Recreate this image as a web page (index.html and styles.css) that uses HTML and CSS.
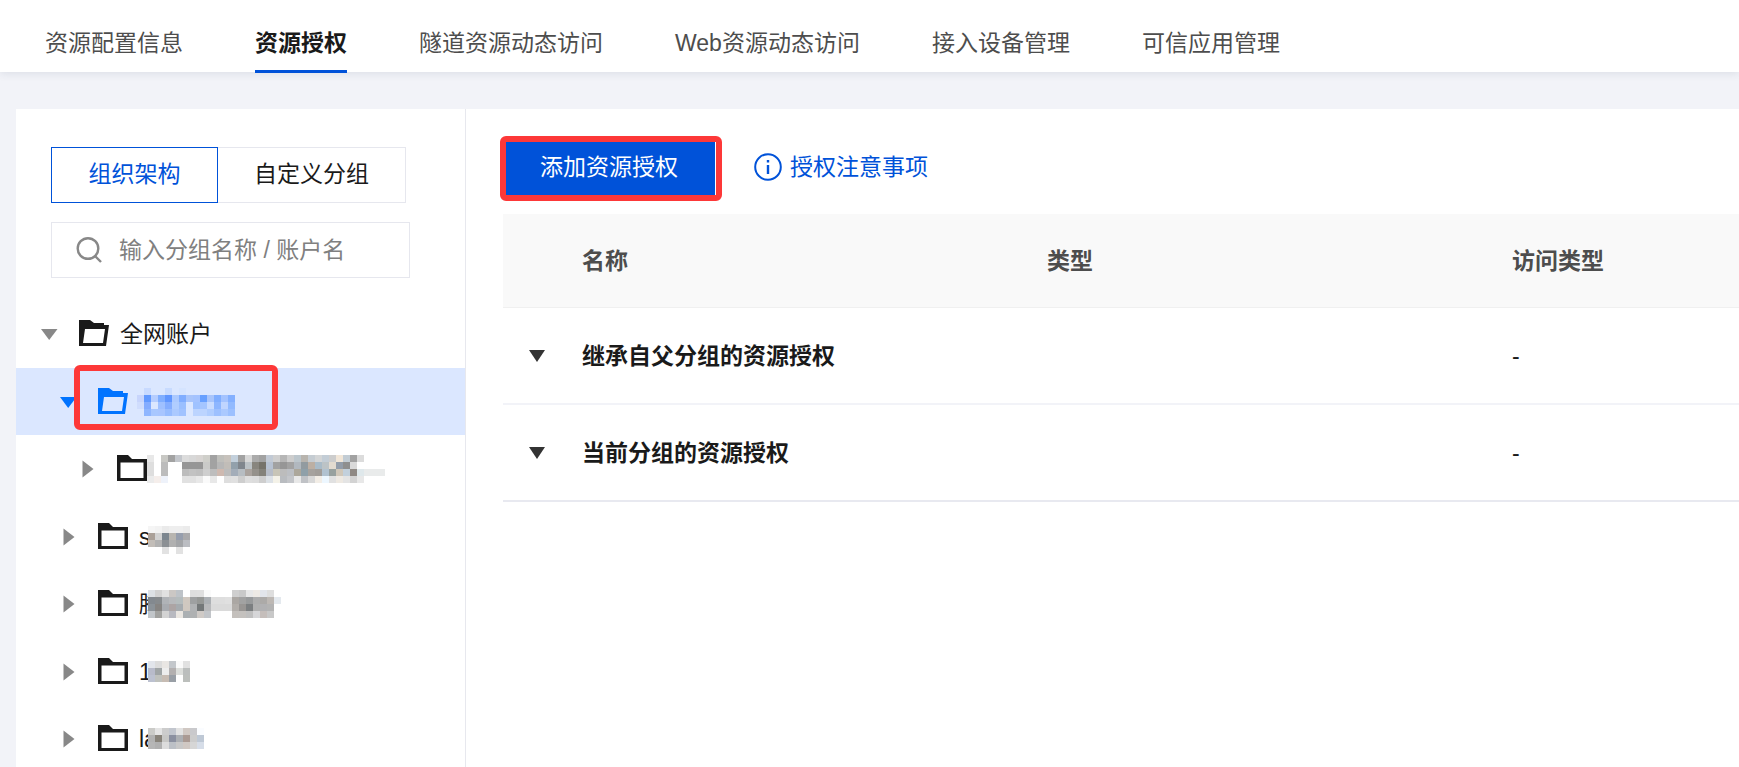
FILE: index.html
```html
<!DOCTYPE html>
<html lang="zh-CN">
<head>
<meta charset="utf-8">
<title>资源授权</title>
<link rel="stylesheet" href="styles.css">
</head>
<body>
<svg class="sprite" aria-hidden="true">
  <symbol id="folder" viewBox="0 0 30 26"><path fill="currentColor" fill-rule="evenodd" d="M0 0H11L15 4H30V26H0ZM3.500 7.500V23H26.500V7.500Z"/></symbol>
  <symbol id="folder-open" viewBox="0 0 30 26"><path fill="currentColor" fill-rule="evenodd" d="M0 0H11L15 3H25V5H30L27 26H0ZM6 9L4 23H24L26 9Z"/></symbol>
  <symbol id="down" viewBox="0 0 18 18"><path fill="currentColor" d="M1 4H17.500L9.200 15Z"/></symbol>
  <symbol id="right" viewBox="0 0 18 18"><path fill="currentColor" d="M4.500 0.500L15.500 9L4.500 17.500Z"/></symbol>
</svg>
<div class="page">
  <nav class="tabs">
    <a class="tab" href="#config">资源配置信息</a>
    <a class="tab active" href="#auth" aria-current="page">资源授权</a>
    <a class="tab" href="#tunnel">隧道资源动态访问</a>
    <a class="tab" href="#web">Web资源动态访问</a>
    <a class="tab" href="#device">接入设备管理</a>
    <a class="tab" href="#app">可信应用管理</a>
  </nav>
  <div class="body">
    <aside class="sidebar">
      <div class="switch">
        <button class="switch-item on" type="button">组织架构</button>
        <button class="switch-item" type="button">自定义分组</button>
      </div>
      <label class="search">
        <svg class="search-icon" viewBox="0 0 26 26" aria-hidden="true"><g fill="none" stroke="#888" stroke-width="2.400"><circle cx="12" cy="11.500" r="10.300"/><path d="M18.500 18.500L25 25"/></g></svg>
        <input class="search-input" type="text" placeholder="输入分组名称 / 账户名" aria-label="输入分组名称 / 账户名">
      </label>
      <ul class="tree">
        <li class="node">
          <svg class="arrow"><use href="#down"/></svg>
          <svg class="folder"><use href="#folder-open"/></svg>
          <span class="name">全网账户</span>
        </li>
        <li class="node level1 selected">
          <svg class="arrow"><use href="#down"/></svg>
          <svg class="folder"><use href="#folder-open"/></svg>
          <span class="mask lead" data-cells="
            dbe7ff c8daff dbe7ff dbe7ff c8dbff dbe7ff d5e4ff dbe7ff dbe7ff dbe7ff dbe7ff dbe7ff dbe7ff dbe7ff
            c8d5fc 6299ff b5cdff 80aeff 6096ff abc9ff 80adff a9c5fb a4c3ff 68a0ff a9c5fb 80aeff a4c3ff 84b0ff
            d0ddfd 84acff dbe7ff 9fc0ff 84adff b0cdff 9abfff dbe7ff 9fc2ff a4c5ff c9dcff 8db6ff c0d5ff 92baff
            dbe7ff 8fb6ff a8c7ff a8c5ff 97bcff abc9ff a0c2ff dbe7ff bcd4ff bcd4ff b0cdff 9dc0ff abc9ff 9cc0ff"></span>
          <span class="highlight"></span>
        </li>
        <li class="node level2">
          <svg class="arrow"><use href="#right"/></svg>
          <svg class="folder"><use href="#folder"/></svg>
          <span class="mask" data-cells="
            e8e8e8 fff c8c8c4 a2a2a2 c3c6cb dcdcdc d8d8d8 d8d5d3 cfcfca a2a2a2 bfbfbb c7c2bc c3d0dc a2a2a2 d8d8d8 ababab a2a2a2 c2cad5 cfcfcf b6b6b6 cdcdcd bcc6cc b8b4ae c5ccd2 d3d5d6 c3cdd6 cdcdcd f1e6d8 c2ccd4 a2a2a2 dcdcdc fff fff fff
            dedede fff bcbcbc fff fff 969696 969696 969696 cacac8 a2a2a2 b7b7b7 c1bdb8 92a0ab 80868d bcc2c6 88857e 76736a b7c2d2 a2a2a2 969696 a2a2a2 b1b8bf 929ba0 bcafa3 a9bbc8 bcc3c6 e3dbd0 939daa 8f8f8f dadada fff fff fff fff
            dedede fff bcbcbc fff fff bcbcbc c2c2c2 bfbfbf cecece bdbdbd ceb9b0 bcbcbc a3adb9 b7bdc2 aaa39e 95918b 84827a b7bdc8 c8c5b7 bcbcbc bcbfc4 aca79b 8fa0a9 a6a29e a29e9a b1c2d0 98a19f d0c7b9 c2d0dc 8f8984 dfe8eb e9ebeb e9ebeb e9ebeb
            ebebeb f5eeeb eef2fa fff fff e1e1e1 e1e1e1 e8e8e8 fafafa e8e8e8 fff dedede e0e0e0 cecece dedede dcdcdc cecece dce1e6 f4f2e8 b9bcc0 c3c5c9 e8e8e8 c0c2c6 d8d8d8 f2ede6 edf7ff e1e1e1 eee9e2 e4e4e4 d3d3d3 e8e8e8 fff fff fff"></span>
        </li>
        <li class="node level1">
          <svg class="arrow"><use href="#right"/></svg>
          <svg class="folder"><use href="#folder"/></svg>
          <span class="name covered">s</span>
          <span class="mask descender" data-cells="
            f5f5f5 f2f2f2 eaeaea eeeeee eeeeee ebebeb
            aaa098 d2d2d2 7c868f b8b5b0 969ead aaaaac
            c2bdb8 b2b2b2 8c9094 b0b0b0 a3a5a8 bbbdc2
            fff fff e2e2e2 fff e2e2e2 fff"></span>
        </li>
        <li class="node level1">
          <svg class="arrow"><use href="#right"/></svg>
          <svg class="folder"><use href="#folder"/></svg>
          <span class="name covered">腾</span>
          <span class="mask" data-cells="
            dde1e5 d2d2d2 e1e1e1 cbc7c4 bec3c8 fff dedede dfdfdf fafafa fff fff fff cfcfcf c9c9c9 e8e8e8 eeeae5 e2e5eb dedede fff
            83898f 868a8d b0b3b7 b7b9bc b5bcbd d0c8c0 9ea0a1 969896 acb0b4 dedede dedede e0e0e0 aba7a3 a2a2a2 989a9b adadad acaaa8 bdb8b4 e4e9ee
            8b9298 868482 a8abb0 aca4a4 a6abaf d0c8c0 b0b2b4 747879 b8b9bb dadada dadada dadada b2aeaa 989593 7b7e80 b0b0b0 b1b1b3 b3b3b3 fff
            c1c5c9 a2a2a0 d3d3d3 b8b9c0 eae6e1 abb0b3 afb1b2 cfcac6 c2c5c9 fff fff fff c4c0bc c4c1be bfbfbf d6d6d8 c5bebb c8c8c8 fff"></span>
        </li>
        <li class="node level1">
          <svg class="arrow"><use href="#right"/></svg>
          <svg class="folder"><use href="#folder"/></svg>
          <span class="name covered">1</span>
          <span class="mask" data-cells="
            e2e5eb dcdcdc e9e6e3 c3c7cb fafafa e1e1e1
            b8bbca a0a5a6 ededed b3b0b0 dcdedb bbbebd
            bcc1d0 bfc1bd c7bcb3 999fa6 fff bcbfbc"></span>
        </li>
        <li class="node level1">
          <svg class="arrow"><use href="#right"/></svg>
          <svg class="folder"><use href="#folder"/></svg>
          <span class="name covered">la</span>
          <span class="mask" data-cells="
            cbcbc8 e4e4e4 cccccc c2c6ce e2e2e2 d0c8c3 c9c9cc fafcff
            b2b2b2 88837a c7c7c5 8b90a0 acafb3 aa9a93 cccccc bec8d5
            b6b6b6 b0b0b0 dcdcdc bcc0c6 c8c8c8 d0c8c3 d6d6d6 d6dde8"></span>
        </li>
      </ul>
    </aside>
    <main class="main">
      <div class="toolbar">
        <div class="add-wrap">
          <button class="add" type="button">添加资源授权</button>
          <span class="highlight"></span>
        </div>
        <a class="notice" href="#notice">
          <svg class="notice-icon" viewBox="0 0 28 28" aria-hidden="true"><circle cx="14" cy="14" r="12.800" fill="none" stroke="#0052d9" stroke-width="2"/><path fill="#0052d9" d="M12.800 7H15.200V9.500H12.800ZM12.800 12H15.200V21H12.800Z"/></svg>
          授权注意事项
        </a>
      </div>
      <table class="grid">
        <colgroup><col class="col-toggle"><col class="col-name"><col class="col-type"><col></colgroup>
        <thead>
          <tr><th></th><th>名称</th><th>类型</th><th>访问类型</th></tr>
        </thead>
        <tbody>
          <tr><td><svg class="toggle" viewBox="0 0 16 12"><path d="M0 0H16L8 12Z"/></svg></td><td class="strong">继承自父分组的资源授权</td><td></td><td>-</td></tr>
          <tr><td><svg class="toggle" viewBox="0 0 16 12"><path d="M0 0H16L8 12Z"/></svg></td><td class="strong">当前分组的资源授权</td><td></td><td>-</td></tr>
        </tbody>
      </table>
    </main>
  </div>
</div>
<script src="mask.js"></script>
</body>
</html>
```
FILE: styles.css
```css
* { box-sizing: border-box; }
body {
  margin: 0;
  font: 23px/32px "Liberation Sans", "Noto Sans CJK SC", sans-serif;
  color: #1a1a1a;
}
button, input { font: inherit; color: inherit; }
a { text-decoration: none; }
.sprite { display: none; }

.page {
  display: flex;
  flex-direction: column;
  height: 100vh;
  overflow: hidden;
  background: #f2f3f8;
}

.tabs {
  display: flex;
  gap: 72px;
  height: 72px;
  flex: none;
  padding-left: 45px;
  background: #fff;
  box-shadow: 0 2px 8px rgba(40, 60, 90, 0.1);
}
.tab {
  height: 73px;
  padding-top: 27px;
  color: #4d4d4d;
  white-space: nowrap;
}
.tab.active {
  color: #1a1a1a;
  font-weight: 700;
  border-bottom: 3px solid #0052d9;
}

.body {
  flex: 1;
  display: flex;
  min-height: 0;
  padding: 37px 0 0 16px;
}

.sidebar {
  width: 450px;
  flex: none;
  padding-top: 38px;
  background: #fff;
  border-right: 1px solid #e7e8ee;
}
.switch { display: flex; margin: 0 35px 19px; }
.switch-item {
  height: 56px;
  width: 188px;
  padding: 0 0 2px;
  border: 1px solid #e6e7ee;
  border-left: 0;
  background: #fff;
}
.switch-item.on {
  width: 167px;
  color: #0052d9;
  border: 1px solid #0052d9;
}
.search {
  display: flex;
  align-items: center;
  gap: 17px;
  width: 359px;
  height: 56px;
  margin-left: 35px;
  padding: 0 24px;
  border: 1px solid #e6e7ee;
}
.search-icon { width: 26px; height: 26px; flex: none; }
.search-input {
  flex: 1;
  min-width: 0;
  padding: 0;
  border: 0;
  outline: 0;
  background: none;
}
.search-input::placeholder { color: #808080; opacity: 1; }

.tree { list-style: none; margin: 22px 0 0; padding: 0; }
.node {
  position: relative;
  display: flex;
  align-items: center;
  height: 67px;
  padding-left: 24px;
}
.node:nth-child(odd) { margin-bottom: 1px; }
.level1 { padding-left: 43px; }
.level2 { padding-left: 62px; }
.arrow { width: 18px; height: 18px; flex: none; margin-right: 21px; color: #888; }
.folder { width: 30px; height: 26px; flex: none; margin-bottom: 2px; }
.name { margin-left: 11px; }
.covered { width: 9px; }
.selected { background: #dbe7ff; }
.selected .arrow, .selected .folder { color: #0073ff; }
.mask { position: relative; display: flex; }
.lead { margin-left: 9px; }
.descender { padding-top: 7px; }
.mask svg { display: block; }

.highlight {
  position: absolute;
  border: 6px solid #fd3838;
  border-radius: 6px;
  pointer-events: none;
}
.node .highlight { left: 58px; top: -3px; width: 204px; height: 65px; }

.main { flex: 1; min-width: 0; padding: 30px 0 0 37px; background: #fff; }
.toolbar { display: flex; align-items: center; gap: 39px; }
.add-wrap { position: relative; }
.add-wrap .highlight { inset: -3px -7px -6px -3px; }
.add {
  display: block;
  width: 212px;
  height: 56px;
  padding: 0;
  border: 0;
  background: #0052d9;
  color: #fff;
}
.notice { display: flex; align-items: center; gap: 8px; color: #0052d9; }
.notice-icon { width: 28px; height: 28px; }

.grid {
  width: 100%;
  margin-top: 19px;
  table-layout: fixed;
  border-collapse: separate;
  border-spacing: 0;
}
.col-toggle { width: 59px; }
.col-name, .col-type { width: 465px; }
.grid th, .grid td { padding: 0 20px; text-align: left; }
.grid th {
  height: 94px;
  background: #f9f9f9;
  border-bottom: 1px solid #f0f0f0;
  color: #4d4d4d;
}
.grid td { height: 97px; border-bottom: 2px solid #f2f3f8; }
.grid td:first-child, .grid th:first-child { padding: 0 0 0 26px; }
.grid tr:last-child td { border-bottom-color: #e8e9f0; }
.strong { font-weight: 700; }
.toggle { display: block; width: 16px; height: 12px; fill: #333; }
```
FILE: mask.js
```js
// Draws each masked account name as a mosaic of 7px cells.
const CELL = 7;
const NS = "http://www.w3.org/2000/svg";
document.querySelectorAll(".mask").forEach((el) => {
  const rows = el.dataset.cells.trim().split("\n").map((r) => r.trim().split(/\s+/));
  const svg = document.createElementNS(NS, "svg");
  svg.setAttribute("width", rows[0].length * CELL);
  svg.setAttribute("height", rows.length * CELL);
  rows.forEach((row, y) => row.forEach((color, x) => {
    const cell = document.createElementNS(NS, "rect");
    cell.setAttribute("x", x * CELL);
    cell.setAttribute("y", y * CELL);
    cell.setAttribute("width", CELL);
    cell.setAttribute("height", CELL);
    cell.setAttribute("fill", "#" + color);
    svg.appendChild(cell);
  }));
  el.appendChild(svg);
});
```
